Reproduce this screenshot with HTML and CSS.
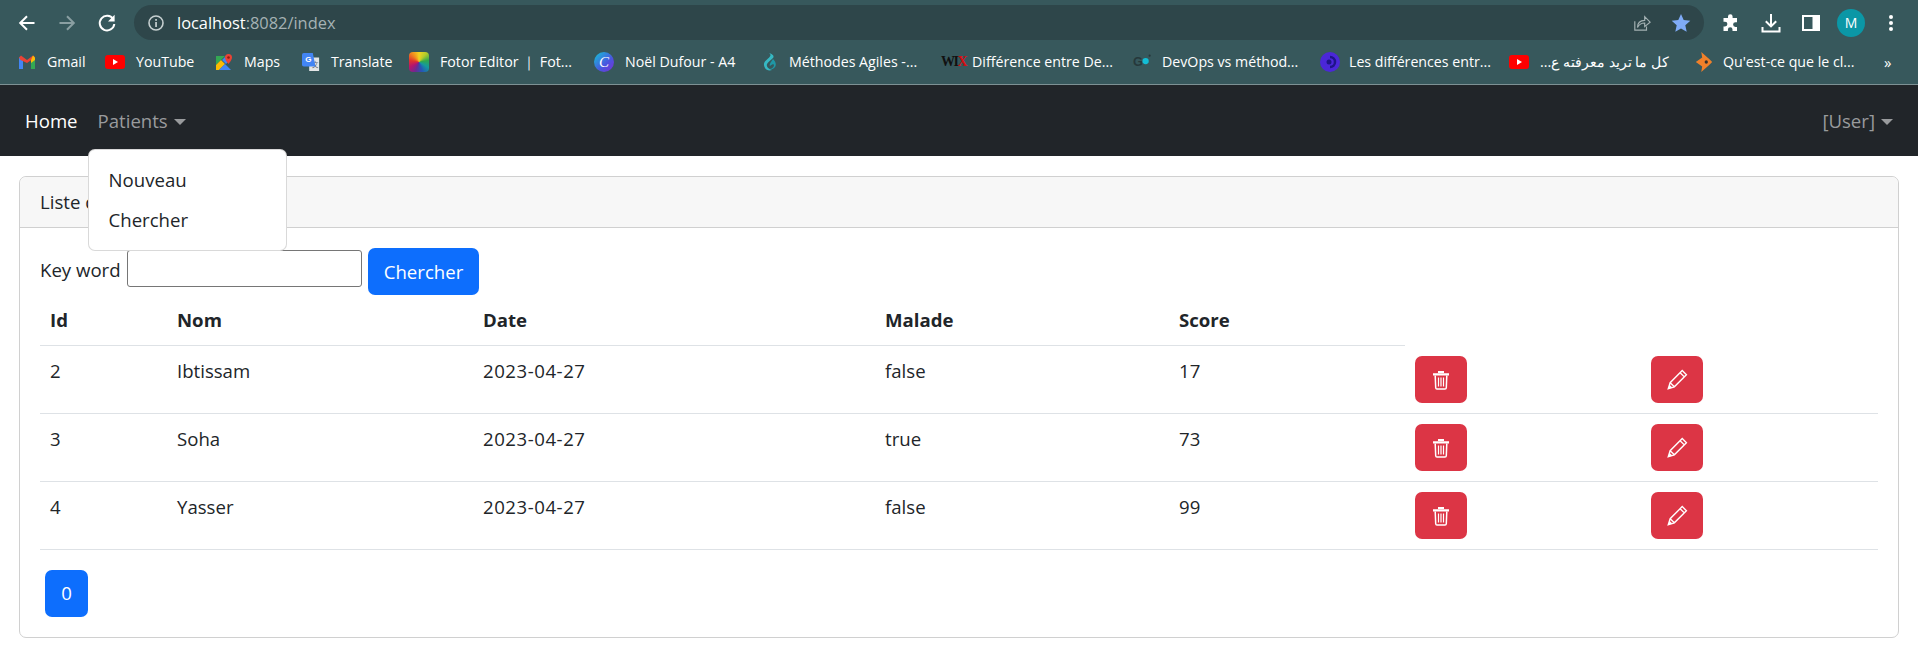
FILE: index.html
```html
<!DOCTYPE html>
<html lang="fr">
<head>
<meta charset="utf-8">
<title>Patients</title>
<link rel="stylesheet" href="styles.css">
</head>
<body>
<header class="browser">
  <div class="toolbar">
    <span class="slot"><svg class="ico20" viewBox="0 0 20 20"><path d="M17.500 10H3.500M10 3.200 3.200 10l6.800 6.800" fill="none" stroke="#fff" stroke-width="2"/></svg></span>
    <span class="slot"><svg class="ico20" viewBox="0 0 20 20"><path d="M2.500 10h14M10 3.200l6.800 6.800-6.800 6.800" fill="none" stroke="#8a9fa2" stroke-width="2"/></svg></span>
    <span class="slot"><svg class="ico20" viewBox="0 0 20 20"><path d="M16.200 6.200A7.300 7.300 0 1 0 17.300 11" fill="none" stroke="#fff" stroke-width="2"/><path d="M17.600 1.800v6.600H11z" fill="#fff"/></svg></span>
    <div class="omnibox">
      <svg class="ico18" viewBox="0 0 18 18"><circle cx="9" cy="9" r="7" fill="none" stroke="#c6cfd0" stroke-width="1.600"/><rect x="8.200" y="8" width="1.700" height="5" fill="#c6cfd0"/><rect x="8.200" y="5" width="1.700" height="1.800" fill="#c6cfd0"/></svg>
      <span class="url">localhost<span class="url-dim">:8082/index</span></span>
      <svg class="ico18 share" viewBox="0 0 20 20"><path d="M2 8v10h13v-4" fill="none" stroke="#a4b1b3" stroke-width="1.300"/><path d="M5 15c0-5 3-8 8-8V3l6 6-6 5v-4c-3.500 0-6 1-8 5z" fill="none" stroke="#a4b1b3" stroke-width="1.300"/></svg>
      <svg class="ico20 star" viewBox="0 0 20 20"><path d="m10 1 2.700 6.100 6.600.7-5 4.400 1.400 6.500L10 15.400l-5.700 3.300 1.400-6.500-5-4.400 6.600-.7z" fill="#7fabf7"/></svg>
    </div>
    <span class="slot"><svg class="ico20" viewBox="0 0 20 20"><path d="M7 3.500a2.300 2.300 0 0 1 4.600 0V5H16v4.200h-1.500a2.400 2.400 0 0 0 0 4.800H16v4H11.500v-1.500a2.300 2.300 0 0 0-4.600 0V18H2.500v-4.500H4a2.400 2.400 0 0 0 0-4.800H2.500V5H7z" fill="#fff"/></svg></span>
    <span class="slot"><svg class="ico20" viewBox="0 0 20 20"><path d="M10 1v12M4.800 8.200 10 13.400l5.200-5.200M1.500 14v4.500h17V14" fill="none" stroke="#fff" stroke-width="2"/></svg></span>
    <span class="slot"><svg class="ico20" viewBox="0 0 20 20"><path d="M1 2h18v16H1zM3 4v12h8.500V4z" fill="#fff" fill-rule="evenodd"/></svg></span>
    <span class="slot"><span class="avatar">M</span></span>
    <span class="slot"><svg class="ico20" viewBox="0 0 20 20"><circle cx="10" cy="4" r="2" fill="#fff"/><circle cx="10" cy="10" r="2" fill="#fff"/><circle cx="10" cy="16" r="2" fill="#fff"/></svg></span>
  </div>
  <nav class="bookmarks">
    <a class="bm"><svg class="fav" viewBox="0 0 18 16"><path d="M1 15V3l4 3v9z" fill="#4285f4"/><path d="M17 15V3l-4 3v9z" fill="#34a853"/><path d="M1 3.500 3 1.500 9 6l6-4.500 2 2-1 3-2-1-5 3.500L2.500 6z" fill="#ea4335"/><path d="M13 6l2-4.500 2 2V6l-4 3z" fill="#fbbc04"/></svg><span>Gmail</span></a>
    <a class="bm"><svg class="fav fav-yt" viewBox="0 0 20 14"><rect width="20" height="14" rx="3" fill="#f00"/><path d="M8 4v6l5-3z" fill="#fff"/></svg><span>YouTube</span></a>
    <a class="bm"><svg class="fav" viewBox="0 0 18 18"><path d="M1 3h9l-9 9z" fill="#34a853"/><path d="M1 17V12l5-5 4 4-6 6z" fill="#fbbc04"/><path d="M4 17l6-6 6 6z" fill="#4285f4"/><path d="M11 3l3 5-3 3-4-4z" fill="#4285f4"/><path d="M13.500 1A3.500 3.500 0 0 0 10 4.500c0 2.500 3.500 6.500 3.500 6.500S17 7 17 4.500A3.500 3.500 0 0 0 13.500 1z" fill="#ea4335"/><circle cx="13.500" cy="4.500" r="1.300" fill="#8f1d14"/></svg><span>Maps</span></a>
    <a class="bm"><svg class="fav" viewBox="0 0 20 20"><rect x="8" y="5" width="11" height="15" fill="#e3e5e6"/><text x="11" y="16" class="fav-glyph-dark">文</text><path d="M2 0h10l3 15H2a2 2 0 0 1-2-2V2a2 2 0 0 1 2-2z" fill="#4285f4"/><text x="3.500" y="10.500" class="fav-glyph">G</text></svg><span>Translate</span></a>
    <a class="bm"><span class="fav-fotor"></span><span>Fotor Editor ｜ Fot...</span></a>
    <a class="bm"><span class="fav-canva">C</span><span>Noël Dufour - A4</span></a>
    <a class="bm"><svg class="fav fav-lg" viewBox="0 0 18 20"><path d="M8 1c3 2 1 4-2 6.500C3 10 2 12 4 16c1 2 4 3 7 2-3-1-6-3-5-6 1-2 4-4 6-6 1.500-1.500 0-4-4-5z" fill="#36b9c4"/><path d="M12 7c2 2 4 5 2 8-1.500 2-4 3-6 2 3 0 5-2 5-4 0-1.500-2-1-4 1-1-1 0-3 3-7z" fill="#1f97a6"/></svg><span>Méthodes Agiles -...</span></a>
    <a class="bm"><span class="fav-wix">WI<b>X</b></span><span>Différence entre De...</span></a>
    <a class="bm"><svg class="fav" viewBox="0 0 20 20"><text x="0" y="14" class="fav-go">G</text><circle cx="14" cy="9" r="3.500" fill="#13bed6"/><circle cx="18.500" cy="3" r="1.200" fill="#26383b"/></svg><span>DevOps vs méthod...</span></a>
    <a class="bm"><svg class="fav fav-lg" viewBox="0 0 20 20"><circle cx="10" cy="10" r="10" fill="#4b27d8"/><path d="M10 5a5 5 0 0 1 5 5 5 5 0 0 1-5 5" fill="none" stroke="#1f1488" stroke-width="2.500"/><circle cx="9" cy="10" r="2.500" fill="#1f1488"/></svg><span>Les différences entr...</span></a>
    <a class="bm"><svg class="fav fav-yt" viewBox="0 0 20 14"><rect width="20" height="14" rx="3" fill="#f00"/><path d="M8 4v6l5-3z" fill="#fff"/></svg><span dir="rtl">كل ما تريد معرفته ع...</span></a>
    <a class="bm"><svg class="fav fav-lg" viewBox="0 0 18 22"><path d="M6 0 15 8l3 3-3 3-9 8 1-6-7-5 7-5z" fill="#f0802a"/><circle cx="11.500" cy="11" r="1.800" fill="#33302e"/></svg><span>Qu'est-ce que le cl...</span><span class="more">»</span></a>
  </nav>
</header>

<nav class="navbar">
  <a class="nav-link active">Home</a>
  <div class="nav-item">
    <a class="nav-link caret">Patients</a>
    <ul class="dropdown">
      <li>Nouveau</li>
      <li>Chercher</li>
    </ul>
  </div>
  <a class="nav-link caret nav-user">[User]</a>
</nav>

<main class="card">
  <div class="card-header">Liste des patients</div>
  <div class="card-body">
    <form class="search">
      <label>Key word</label>
      <input type="text">
      <button type="button" class="btn btn-primary">Chercher</button>
    </form>
    <table>
      <colgroup>
        <col class="c-id"><col class="c-nom"><col class="c-date"><col class="c-malade"><col class="c-score"><col class="c-del"><col>
      </colgroup>
      <thead>
        <tr><th>Id</th><th>Nom</th><th>Date</th><th>Malade</th><th>Score</th></tr>
      </thead>
      <tbody>
        <tr><td>2</td><td>Ibtissam</td><td class="date">2023-04-27</td><td>false</td><td>17</td>
          <td><a class="btn btn-danger"><svg class="trash" viewBox="0 0 18 20"><path d="M1 3.200h16v2.300H1zM6 3V1h6v2" fill="#fff"/><path d="M3.200 5.500l.5 12.300q.1 1.200 1.300 1.200h8q1.200 0 1.300-1.200l.5-12.300" fill="none" stroke="#fff" stroke-width="1.500"/><path d="M6.500 7.500v9M9 7.500v9M11.500 7.500v9" stroke="#fff" stroke-width="1.200"/></svg></a></td>
          <td><a class="btn btn-danger"><svg class="pencil" viewBox="0 0 20 20"><path d="M1.200 18.800 3 13 14.500 1.500l4 4L7 17zM3 13l4 4M12.500 3.500l4 4" fill="none" stroke="#fff" stroke-width="1.300"/><path d="M1.200 18.800 2.400 15l2.600 2.600z" fill="#fff"/></svg></a></td></tr>
        <tr><td>3</td><td>Soha</td><td class="date">2023-04-27</td><td>true</td><td>73</td>
          <td><a class="btn btn-danger"><svg class="trash" viewBox="0 0 18 20"><path d="M1 3.200h16v2.300H1zM6 3V1h6v2" fill="#fff"/><path d="M3.200 5.500l.5 12.300q.1 1.200 1.300 1.200h8q1.200 0 1.300-1.200l.5-12.300" fill="none" stroke="#fff" stroke-width="1.500"/><path d="M6.500 7.500v9M9 7.500v9M11.500 7.500v9" stroke="#fff" stroke-width="1.200"/></svg></a></td>
          <td><a class="btn btn-danger"><svg class="pencil" viewBox="0 0 20 20"><path d="M1.200 18.800 3 13 14.500 1.500l4 4L7 17zM3 13l4 4M12.500 3.500l4 4" fill="none" stroke="#fff" stroke-width="1.300"/><path d="M1.200 18.800 2.400 15l2.600 2.600z" fill="#fff"/></svg></a></td></tr>
        <tr><td>4</td><td>Yasser</td><td class="date">2023-04-27</td><td>false</td><td>99</td>
          <td><a class="btn btn-danger"><svg class="trash" viewBox="0 0 18 20"><path d="M1 3.200h16v2.300H1zM6 3V1h6v2" fill="#fff"/><path d="M3.200 5.500l.5 12.300q.1 1.200 1.300 1.200h8q1.200 0 1.300-1.200l.5-12.300" fill="none" stroke="#fff" stroke-width="1.500"/><path d="M6.500 7.500v9M9 7.500v9M11.500 7.500v9" stroke="#fff" stroke-width="1.200"/></svg></a></td>
          <td><a class="btn btn-danger"><svg class="pencil" viewBox="0 0 20 20"><path d="M1.200 18.800 3 13 14.500 1.500l4 4L7 17zM3 13l4 4M12.500 3.500l4 4" fill="none" stroke="#fff" stroke-width="1.300"/><path d="M1.200 18.800 2.400 15l2.600 2.600z" fill="#fff"/></svg></a></td></tr>
      </tbody>
    </table>
    <div class="pager"><a class="btn btn-primary">0</a></div>
  </div>
</main>
</body>
</html>
```
FILE: styles.css
```css
* { box-sizing: border-box; }
body {
  margin: 0;
  background: #fff;
  color: #212529;
  font-family: "Open Sans", "Noto Sans", sans-serif;
  font-size: 18.6px;
  line-height: 30px;
}

/* browser chrome */
.browser { background: #37585c; height: 85px; border-bottom: 1px solid #7d9194; }
.toolbar { display: flex; align-items: center; height: 40px; padding: 5px 7px 0; }
.slot { flex: none; width: 40px; height: 35px; display: flex; align-items: center; justify-content: center; }
.ico20 { width: 20px; height: 20px; flex: none; }
.ico18 { width: 18px; height: 18px; flex: none; }
.omnibox {
  flex: 1; height: 35px; margin: 0 7px; padding: 0 13px;
  display: flex; align-items: center; background: #2e464a; border-radius: 18px;
}
.url { margin-left: 12px; font-size: 16.4px; line-height: 20px; color: #fff; }
.url-dim { color: #a5b2b4; }
.share { margin-left: auto; }
.star { margin-left: 20px; }
.avatar {
  width: 28px; height: 28px; border-radius: 50%; background: #0b97a6; color: #fff;
  font-size: 14px; line-height: 28px; text-align: center;
}
.bookmarks {
  display: grid; height: 44px; align-items: center; padding-left: 18px;
  grid-template-columns: 89px 108px 87px 109px 185px 165px 183px 189px 188px 190px 184px 1fr;
  color: #fff; font-size: 14.2px; line-height: 18px;
}
.bm { display: flex; align-items: center; gap: 12px; white-space: nowrap; }
.fav { width: 18px; height: 18px; flex: none; margin-right: -1px; }
.fav-yt { width: 20px; height: 14px; margin-left: -2px; margin-right: -1px; }
.fav-lg { width: 20px; height: 20px; margin-left: -1px; margin-right: -3px; }
.fav-glyph { font: 700 9px "Liberation Sans", sans-serif; fill: #fff; }
.fav-glyph-dark { font: 7px "Noto Sans CJK SC", sans-serif; fill: #5f6368; }
.fav-go { font: 700 14px "Liberation Sans", sans-serif; fill: #26383b; }
.fav-fotor {
  width: 20px; height: 20px; flex: none; border-radius: 4px; margin-left: -2px; margin-right: -1px;
  background: conic-gradient(#f4d320, #b6cc2a, #2fa84f, #159a9c, #2458b6, #6a2b93, #b5146f, #e0322e, #f28a1e, #f4d320);
}
.fav-canva {
  width: 20px; height: 20px; flex: none; border-radius: 50%; margin-left: -2px; margin-right: -1px;
  background: linear-gradient(135deg, #12c8d6, #4a54e0 60%, #7b2fd0);
  color: #fff; text-align: center;
  font: italic 15px/20px "Liberation Serif", serif;
}
.fav-wix {
  width: 21px; flex: none; margin-left: -3px; margin-right: -2px;
  font: 700 14px/16px "Liberation Serif", serif; letter-spacing: -1.500px; color: #111;
}
.fav-wix b { color: #d40d12; }
.more { position: absolute; left: 1884px; font-size: 15px; }

/* navbar */
.navbar {
  display: flex; align-items: center; height: 71px; padding: 0 15px;
  background: #212529;
}
.nav-item { position: relative; }
.nav-link { display: block; padding: 0 10px; color: #999b9d; }
.nav-link.active { color: #fff; }
.caret::after {
  content: ""; display: inline-block; margin-left: 6px; vertical-align: 3px;
  border-top: 6px solid; border-left: 6px solid transparent; border-right: 6px solid transparent;
}
.nav-user { margin-left: auto; padding-right: 10px; }
.dropdown {
  position: absolute; top: 43px; left: 0; z-index: 5; width: 199px;
  margin: 0; padding: 10px 0; list-style: none;
  background: #fff; border: 1px solid rgba(0, 0, 0, .15); border-radius: 7px;
}
.dropdown li { padding: 5px 20px; }

/* card */
.card { margin: 20px 19px; border: 1px solid #d0d0d0; border-radius: 7px; }
.card-header {
  height: 51px; padding: 10px 20px; background: #f7f7f7;
  border-bottom: 1px solid #d0d0d0; border-radius: 7px 7px 0 0;
}
.card-body { padding: 20px; }
.btn {
  display: inline-block; height: 47px; padding: 8px 15px; border: 0; border-radius: 7px;
  color: #fff; font: inherit; vertical-align: top; text-align: center;
}
.btn-primary { background: #0d6efd; }
.btn-danger { background: #dc3545; width: 52px; display: inline-flex; align-items: center; justify-content: center; padding: 0; }
.search { display: flex; align-items: flex-start; height: 47px; white-space: nowrap; }
.search label { width: 87px; margin-top: 7px; }
.search .btn { width: 111px; padding: 8px 0; margin-left: 6px; }
.search input {
  width: 235px; height: 37px; padding: 1px 2px; margin: 2px 0 0;
  border: 1px solid #767676; border-radius: 3px; font: inherit;
}

/* table */
table { width: 100%; table-layout: fixed; border-collapse: separate; border-spacing: 0; margin-bottom: 20px; }
.c-id { width: 127px; }
.c-nom { width: 306px; }
.c-date { width: 402px; }
.c-malade { width: 294px; }
.c-score { width: 236px; }
.c-del { width: 236px; }
th, td { padding: 10px; text-align: left; vertical-align: top; border-bottom: 1px solid #dee2e6; }
th { font-weight: 700; }
thead th { height: 51px; }
td { height: 68px; }
.date { letter-spacing: .55px; }
.trash { width: 18px; height: 20px; }
.pencil { width: 21px; height: 21px; }
.pager { padding-left: 5px; height: 47px; }
.pager .btn { width: 43px; padding: 8px 0; }
```
